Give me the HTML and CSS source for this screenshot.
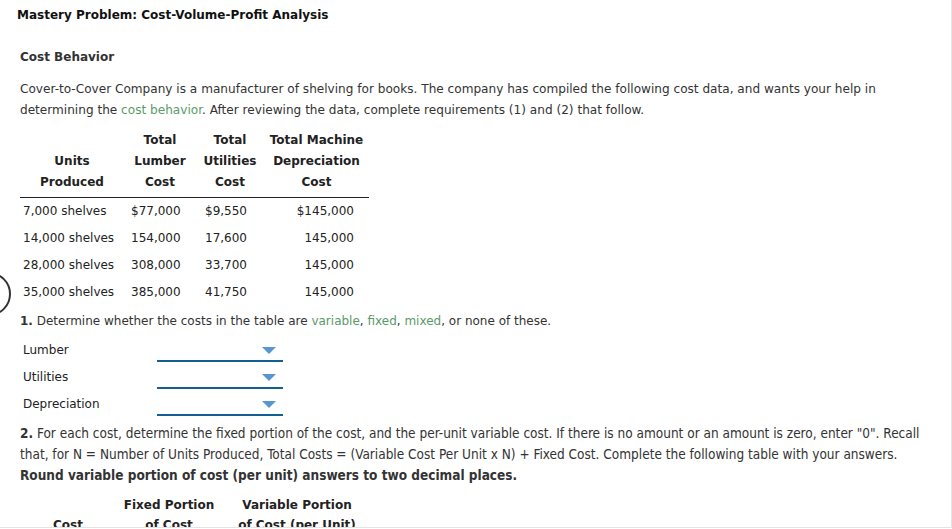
FILE: index.html
```html
<!DOCTYPE html>
<html>
<head>
<meta charset="utf-8">
<link rel="stylesheet" href="styles.css">
</head>
<body>
<div class="page">
  <h1 class="title">Mastery Problem: Cost-Volume-Profit Analysis</h1>
  <div class="content">
    <h2 class="section">Cost Behavior</h2>
    <p class="intro">Cover-to-Cover Company is a manufacturer of shelving for books. The company has compiled the following cost data, and wants your help in determining the <span class="term">cost behavior</span>. After reviewing the data, complete requirements (1) and (2) that follow.</p>

    <table class="data">
      <thead>
        <tr>
          <th class="c1"><br>Units<br>Produced</th>
          <th class="c2">Total<br>Lumber<br>Cost</th>
          <th class="c3">Total<br>Utilities<br>Cost</th>
          <th class="c4">Total Machine<br>Depreciation<br>Cost</th>
        </tr>
      </thead>
      <tbody>
        <tr><td class="c1">7,000 shelves</td><td class="c2">$77,000</td><td class="c3">$9,550</td><td class="c4">$145,000</td></tr>
        <tr><td class="c1">14,000 shelves</td><td class="c2">154,000</td><td class="c3">17,600</td><td class="c4">145,000</td></tr>
        <tr><td class="c1">28,000 shelves</td><td class="c2">308,000</td><td class="c3">33,700</td><td class="c4">145,000</td></tr>
        <tr><td class="c1">35,000 shelves</td><td class="c2">385,000</td><td class="c3">41,750</td><td class="c4">145,000</td></tr>
      </tbody>
    </table>

    <p class="q1"><b>1.</b> Determine whether the costs in the table are <span class="term">variable</span>, <span class="term">fixed</span>, <span class="term">mixed</span>, or none of these.</p>

    <div class="selects">
      <div class="srow"><span class="slabel">Lumber</span><span class="select"><span class="arrow"></span></span></div>
      <div class="srow"><span class="slabel">Utilities</span><span class="select"><span class="arrow"></span></span></div>
      <div class="srow"><span class="slabel">Depreciation</span><span class="select"><span class="arrow"></span></span></div>
    </div>

    <p class="q2"><b>2.</b> For each cost, determine the fixed portion of the cost, and the per-unit variable cost. If there is no amount or an amount is zero, enter "0". Recall<br>that, for N = Number of Units Produced, Total Costs = (Variable Cost Per Unit x N) + Fixed Cost. Complete the following table with your answers.<br><b>Round variable portion of cost (per unit) answers to two decimal places.</b></p>

    <table class="answers">
      <tr>
        <th class="a1"><br>Cost</th>
        <th class="a2">Fixed Portion<br>of Cost</th>
        <th class="a3">Variable Portion<br>of Cost (per Unit)</th>
      </tr>
    </table>
  </div>
  <div class="ring"></div>
</div>
</body>
</html>
```

FILE: styles.css
```css
html, body {
  margin: 0;
  padding: 0;
  background: #ffffff;
}

body {
  font-family: "DejaVu Sans", Verdana, sans-serif;
  font-size: 12px;
  color: #333333;
}

.page {
  position: relative;
  width: 951px;
  height: 527px;
  overflow: hidden;
  border-right: 1px solid #e4e4e4;
  border-bottom: 1px solid #e4e4e4;
}

.title {
  margin: 0;
  padding: 7px 0 0 17px;
  font-size: 12px;
  font-weight: bold;
  color: #111111;
  line-height: 16px;
}

.content {
  padding: 0 0 0 20px;
}

.section {
  margin: 26px 0 0 0;
  font-size: 12px;
  font-weight: bold;
  color: #333333;
  line-height: 16px;
}

.intro {
  margin: 14px 0 0 0;
  font-size: 12.1px;
  line-height: 21px;
  width: 890px;
}

.term {
  color: #5a9a68;
}

.data {
  border-collapse: collapse;
  margin-top: 9px;
  color: #222222;
  table-layout: fixed;
  width: 349px;
}

.data th,
.data td {
  box-sizing: border-box;
}

.data th {
  font-weight: bold;
  line-height: 21px;
  padding: 0 0 4px 0;
  text-align: center;
  border-bottom: 1px solid #222222;
  vertical-align: bottom;
  white-space: nowrap;
}

.data td {
  height: 27px;
  padding: 0;
  line-height: 21px;
  white-space: nowrap;
}

.data .c1 { width: 104px; }
.data .c2 { width: 72px; }
.data .c3 { width: 68px; }
.data .c4 { width: 105px; }

.data td.c1 { padding-left: 3px; }
.data td.c2 { padding-left: 7px; }
.data td.c3 { padding-left: 9px; }
.data td.c4 { text-align: right; padding-right: 15px; }

.q1 {
  margin: 5px 0 0 0;
  line-height: 21px;
}

.selects {
  margin-top: 5px;
  display: flex;
  flex-direction: column;
}

.srow {
  display: flex;
  align-items: flex-start;
  height: 27px;
}

.slabel {
  width: 134px;
  padding-left: 3px;
  line-height: 27px;
  color: #222222;
}

.select {
  position: relative;
  display: block;
  width: 126px;
  height: 23px;
  border-bottom: 2px solid #135f93;
}

.arrow {
  position: absolute;
  right: 7px;
  top: 10px;
  width: 0;
  height: 0;
  border-left: 7px solid transparent;
  border-right: 7px solid transparent;
  border-top: 7px solid #5896cf;
}

.q2 {
  margin: 5px 0 0 0;
  font-family: "DejaVu Sans Condensed", "DejaVu Sans", sans-serif;
  font-size: 13.5px;
  line-height: 21px;
  white-space: nowrap;
}

.answers {
  border-collapse: collapse;
  margin-top: 9px;
  color: #222222;
}

.answers th {
  font-weight: bold;
  line-height: 20px;
  padding: 0;
  text-align: center;
  vertical-align: bottom;
  white-space: nowrap;
}

.answers .a1 { width: 96px; }
.answers .a2 { width: 106px; }
.answers .a3 { width: 150px; }

.ring {
  position: absolute;
  left: -33px;
  top: 272px;
  width: 40px;
  height: 40px;
  border: 2px solid #333333;
  border-radius: 50%;
}
```
